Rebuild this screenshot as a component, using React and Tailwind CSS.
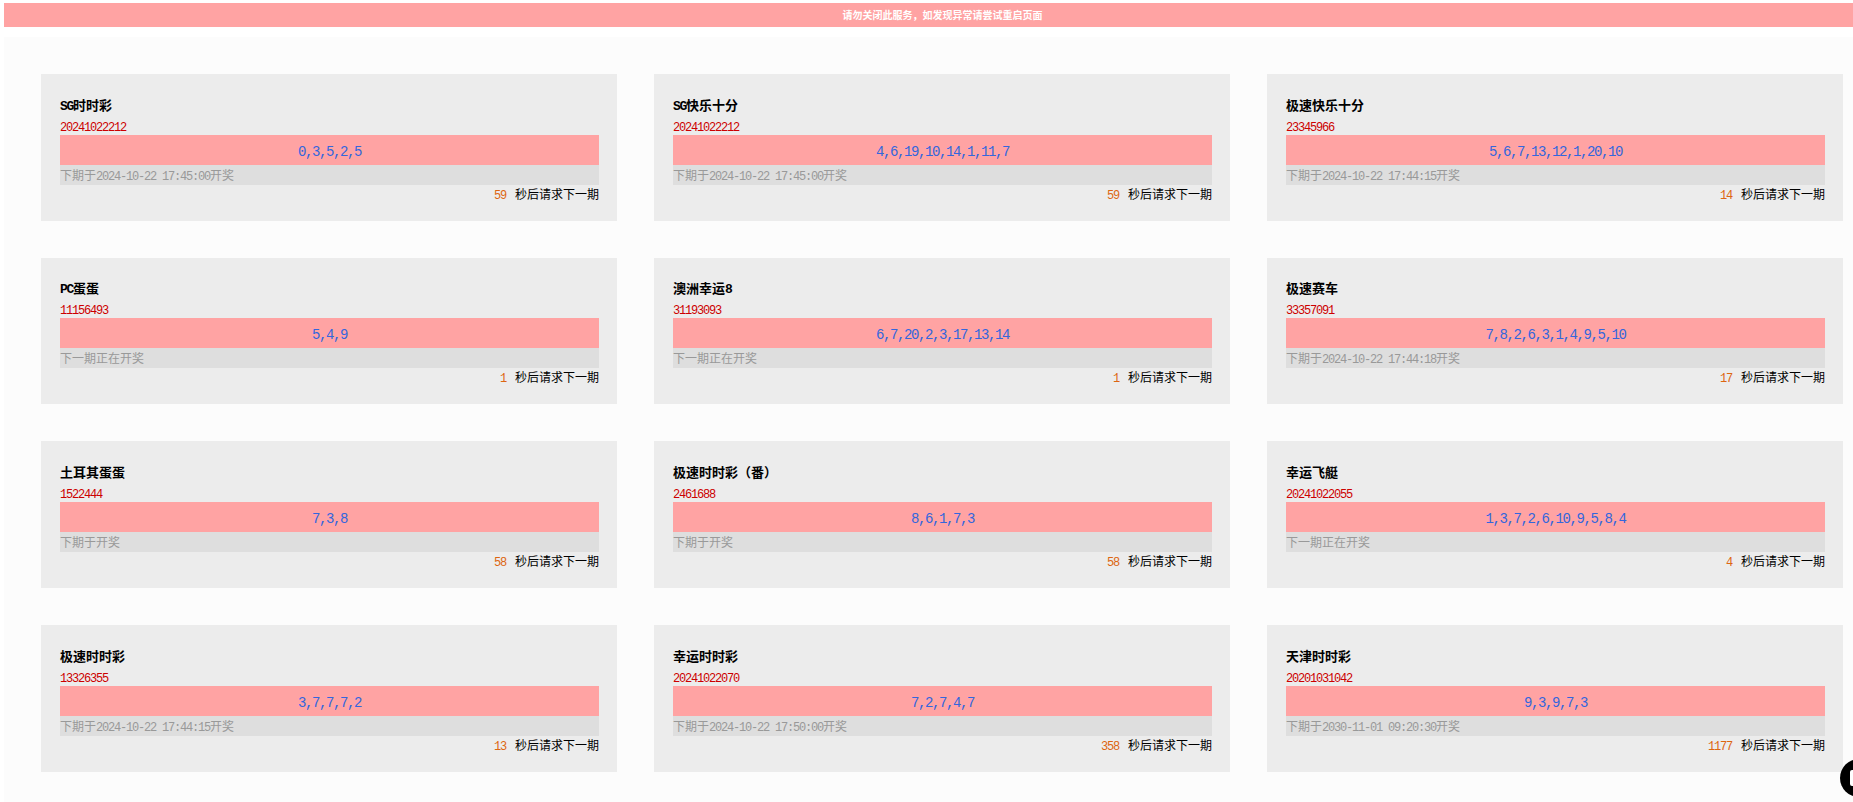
const cards = [
  { name: "SG时时彩", issue: "20241022212", nums: "0,3,5,2,5", next: "下期于2024-10-22 17:45:00开奖", secs: 59 },
  { name: "SG快乐十分", issue: "20241022212", nums: "4,6,19,10,14,1,11,7", next: "下期于2024-10-22 17:45:00开奖", secs: 59 },
  { name: "极速快乐十分", issue: "23345966", nums: "5,6,7,13,12,1,20,10", next: "下期于2024-10-22 17:44:15开奖", secs: 14 },
  { name: "PC蛋蛋", issue: "11156493", nums: "5,4,9", next: "下一期正在开奖", secs: 1 },
  { name: "澳洲幸运8", issue: "31193093", nums: "6,7,20,2,3,17,13,14", next: "下一期正在开奖", secs: 1 },
  { name: "极速赛车", issue: "33357091", nums: "7,8,2,6,3,1,4,9,5,10", next: "下期于2024-10-22 17:44:18开奖", secs: 17 },
  { name: "土耳其蛋蛋", issue: "1522444", nums: "7,3,8", next: "下期于开奖", secs: 58 },
  { name: "极速时时彩（番）", issue: "2461688", nums: "8,6,1,7,3", next: "下期于开奖", secs: 58 },
  { name: "幸运飞艇", issue: "20241022055", nums: "1,3,7,2,6,10,9,5,8,4", next: "下一期正在开奖", secs: 4 },
  { name: "极速时时彩", issue: "13326355", nums: "3,7,7,7,2", next: "下期于2024-10-22 17:44:15开奖", secs: 13 },
  { name: "幸运时时彩", issue: "20241022070", nums: "7,2,7,4,7", next: "下期于2024-10-22 17:50:00开奖", secs: 358 },
  { name: "天津时时彩", issue: "20201031042", nums: "9,3,9,7,3", next: "下期于2030-11-01 09:20:30开奖", secs: 1177 },
];

// latin runs get a squeezed mono face so they keep the half-width look of the original font
const Txt = ({ children }) =>
  String(children)
    .split(/([\x20-\x7e]+)/)
    .map((part, i) =>
      /[\x20-\x7e]/.test(part) ? (
        <span key={i} className="font-['Liberation_Mono',monospace] tracking-[-0.1em]">
          {part}
        </span>
      ) : (
        part
      )
    );

const Card = ({ name, issue, nums, next, secs }) => (
  <div className="h-[146.67px] bg-[#ececec] pt-[20.5px] pr-[18px] pl-[19px]">
    <div className="h-[20px] text-[13px] leading-[20px] font-bold text-black">
      <Txt>{name}</Txt>
    </div>
    <div className="h-[20px] text-[12px] leading-[21px] text-[#cc0000]">
      <Txt>{issue}</Txt>
    </div>
    <div className="h-[30px] bg-[#ffa3a3] text-center text-[14px] leading-[30px] font-normal text-[#3366dd]">
      <Txt>{nums}</Txt>
    </div>
    <div className="h-[20px] bg-[#dedede] text-[12px] leading-[20px] text-[#999999]">
      <Txt>{next}</Txt>
    </div>
    <div className="flex h-[18px] justify-end gap-[9px] text-[12px] leading-[18px] text-black">
      <span className="text-[#dd6611]">
        <Txt>{secs}</Txt>
      </span>
      <span>秒后请求下一期</span>
    </div>
  </div>
);

export default function App() {
  return (
    <div className="relative h-[802px] overflow-hidden bg-white pt-[3px] pl-[4px] font-['Noto_Sans_CJK_SC',sans-serif]">
      <div className="h-[24px] bg-[#ffa3a3] pl-[28px] text-center text-[10px] leading-[24px] font-bold text-white">
        请勿关闭此服务，如发现异常请尝试重启页面
      </div>
      <div className="mt-[10px] h-[765px] bg-[#fcfcfc] pt-[37.1px] pl-[37px]">
        <div className="grid w-[1802px] grid-cols-3 gap-[37px]">
          {cards.map((card) => (
            <Card key={card.name} {...card} />
          ))}
        </div>
      </div>
      <div className="absolute right-[-25px] bottom-[5px] flex h-[38px] w-[38px] items-center rounded-full bg-black pl-[10px]">
        <div className="h-[16px] w-[14px] rounded-[2px] bg-white" />
      </div>
    </div>
  );
}
